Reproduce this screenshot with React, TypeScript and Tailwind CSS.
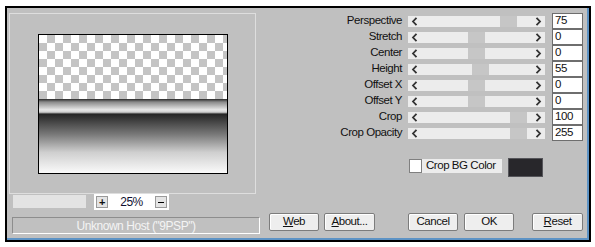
import React from 'react';

const sliders = [
  { label: 'Perspective', value: '75', pos: 92 },
  { label: 'Stretch', value: '0', pos: 60 },
  { label: 'Center', value: '0', pos: 60 },
  { label: 'Height', value: '55', pos: 64 },
  { label: 'Offset X', value: '0', pos: 60 },
  { label: 'Offset Y', value: '0', pos: 60 },
  { label: 'Crop', value: '100', pos: 102 },
  { label: 'Crop Opacity', value: '255', pos: 102 },
];

function Chevron({ dir }: { dir: 'left' | 'right' }) {
  return (
    <svg width="7" height="9" viewBox="0 0 7 9" className="shrink-0">
      <path
        d={dir === 'left' ? 'M5.5 0.8 L2 4.5 L5.5 8.2' : 'M1.5 0.8 L5 4.5 L1.5 8.2'}
        fill="none"
        stroke="#333333"
        strokeWidth="1.8"
      />
    </svg>
  );
}

function SliderRow({ label, value, pos }: { label: string; value: string; pos: number }) {
  return (
    <div className="flex items-center h-[16px]">
      <div className="w-[132px] text-right">{label}</div>
      <div className="relative ml-[6px] w-[137px] h-[11px] bg-[#ececec] flex items-center justify-between px-[3px]">
        <div className="absolute top-0 h-[11px] w-[17px] bg-[#c6c6c6]" style={{ left: pos }} />
        <Chevron dir="left" />
        <Chevron dir="right" />
      </div>
      <div className="ml-[7px] w-[31px] h-[16px] bg-white border border-[#6e6e6e] pl-[2px] flex items-center">
        {value}
      </div>
    </div>
  );
}

function Button({ children, w }: { children: React.ReactNode; w: string }) {
  return (
    <div
      className={`${w} h-[18px] bg-[#eeeeee] border border-[#7c7c7c] rounded-[2px] shadow-[inset_1px_1px_0_#ffffff] flex items-center justify-center`}
    >
      {children}
    </div>
  );
}

export default function App() {
  return (
    <div className="w-[595px] h-[247px] bg-white pt-[6px] pl-[5px] font-['Liberation_Sans',Arial,sans-serif] text-[11.5px] tracking-[-0.45px] leading-none text-[#111]">
      <div className="w-[586px] h-[236px] border-2 border-black">
        <div className="h-full bg-[#c0c0c0] border-r-2 border-b-2 border-[#5d93c5] flex flex-col">
          <div className="flex h-[205px]">
            {/* preview side */}
            <div className="w-[263px] pl-[2px] pt-[5px]">
              <div className="w-[247px] h-[181px] border border-[#dedede] flex items-center justify-center">
                <div className="w-[190px] h-[140px] border border-black flex flex-col">
                  <div className="h-[64px] bg-[conic-gradient(#c4c4c4_25%,#ffffff_0_50%,#c4c4c4_0_75%,#ffffff_0)] bg-[length:16px_16px]" />
                  <div className="h-[15px] bg-[linear-gradient(to_bottom,#2a2a2a_0%,#8a8a8a_20%,#e8e8e8_72%,#cfcfcf_88%,#2e2e2e_100%)]" />
                  <div className="flex-1 bg-[linear-gradient(to_bottom,#252525_0%,#7a7a7a_35%,#cfcfcf_65%,#fafafa_100%)]" />
                </div>
              </div>
              <div className="flex items-start">
                <div className="ml-[4px] mt-[1px] w-[73px] h-[13px] bg-[#e3e3e3]" />
                <div className="ml-[8px] w-[75px] h-[16px] bg-white flex items-center px-[2px]">
                  <div className="w-[12px] h-[12px] bg-[#e4e4e4] border border-[#9a9a9a] flex items-center justify-center font-bold text-[11px]">
                    +
                  </div>
                  <div className="flex-1 text-center text-[#101030] text-[12px]">25%</div>
                  <div className="w-[12px] h-[12px] bg-[#e4e4e4] border border-[#9a9a9a] flex items-center justify-center">
                    <div className="w-[6px] h-px bg-black" />
                  </div>
                </div>
              </div>
            </div>

            {/* controls side */}
            <div className="w-[315px] pt-[5px]">
              {sliders.map((s) => (
                <SliderRow key={s.label} {...s} />
              ))}
              <div className="flex items-start mt-[17px] ml-[139px]">
                <div className="mt-[1px] w-[13px] h-[14px] bg-white border border-[#808080]" />
                <div className="mt-[1px] w-[80px] h-[14px] bg-[#ececec] pl-[4px] flex items-center">Crop BG Color</div>
                <div className="ml-[6px] w-[35px] h-[19px] bg-[#28272b] border border-[#55555a]" />
              </div>
            </div>
          </div>

          <div className="flex items-start h-[23px]">
            <div className="ml-[5px] mt-[4px] w-[248px] h-[17px] border border-t-[#8d8d8d] border-l-[#8d8d8d] border-b-white border-r-white flex items-center justify-center text-[#f4f4f4] text-[12px]">
              Unknown Host ("9PSP")
            </div>
            <div className="ml-[9px]">
              <Button w="w-[50px]">
                <span><span className="underline">W</span>eb</span>
              </Button>
            </div>
            <div className="ml-[5px]">
              <Button w="w-[51px]">
                <span><span className="underline">A</span>bout...</span>
              </Button>
            </div>
            <div className="ml-[33px]">
              <Button w="w-[50px]">Cancel</Button>
            </div>
            <div className="ml-[6px]">
              <Button w="w-[50px]">OK</Button>
            </div>
            <div className="ml-[18px]">
              <Button w="w-[51px]">
                <span><span className="underline">R</span>eset</span>
              </Button>
            </div>
          </div>
        </div>
      </div>
    </div>
  );
}
